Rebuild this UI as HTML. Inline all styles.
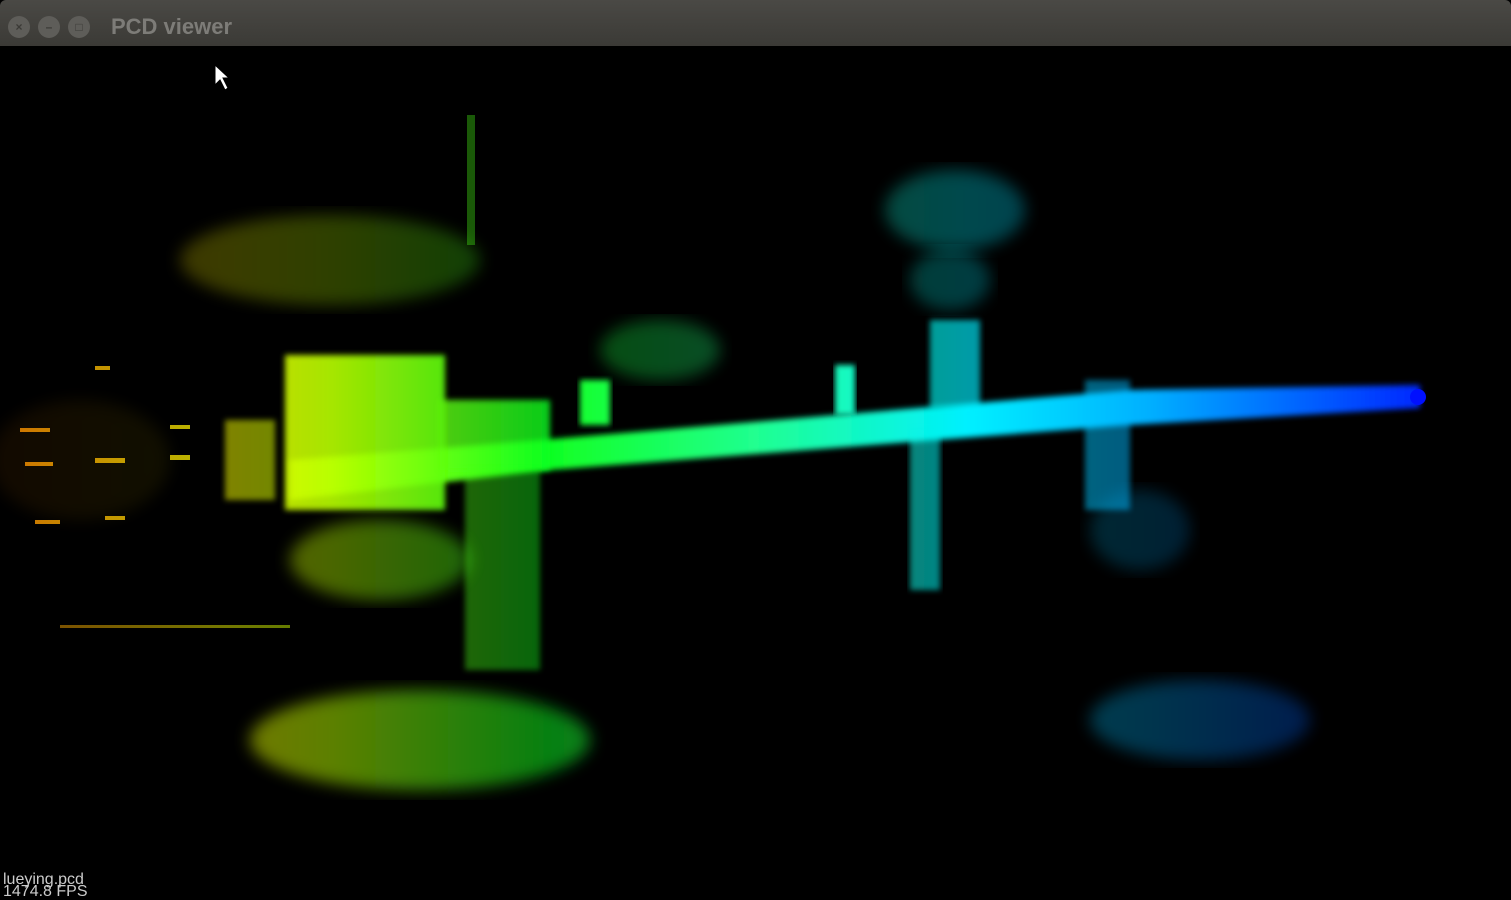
<!DOCTYPE html>
<html><head><meta charset="utf-8"><style>
html,body{margin:0;padding:0;background:#000;width:1511px;height:898px;overflow:hidden}
#bar{position:absolute;left:0;top:0;width:1511px;height:46px;background:linear-gradient(#4a4945,#3b3a36);border-radius:6px 6px 0 0}
.b{position:absolute;top:16px;width:22px;height:22px;border-radius:50%;background:#5e5d59;color:#3b3a36;font:bold 12px "Liberation Sans",sans-serif;text-align:center;line-height:22px}
#t{position:absolute;left:111px;top:14px;font:bold 22px "Liberation Sans",sans-serif;color:#7d7c78}
#txt{position:absolute;left:3px;top:874px;font:16px "Liberation Sans",sans-serif;color:#ccc;line-height:12px}
svg{position:absolute;left:0;top:46px}
</style></head><body>
<div id="bar"><div class="b" style="left:8px">×</div><div class="b" style="left:38px">–</div><div class="b" style="left:68px">□</div><div id="t">PCD viewer</div></div>
<svg width="1511" height="852" viewBox="0 46 1511 852">
<defs>
<linearGradient id="g" x1="0" x2="1511" y1="0" y2="0" gradientUnits="userSpaceOnUse">
<stop offset="0" stop-color="#ff8a00"/><stop offset="0.15" stop-color="#e8f000"/><stop offset="0.22" stop-color="#b8ff00"/>
<stop offset="0.36" stop-color="#10ff20"/><stop offset="0.5" stop-color="#20ff90"/><stop offset="0.64" stop-color="#00f0ff"/>
<stop offset="0.76" stop-color="#00b0ff"/><stop offset="0.95" stop-color="#0020ff"/></linearGradient>
<filter id="f"><feGaussianBlur stdDeviation="3"/></filter>
<filter id="f2"><feGaussianBlur stdDeviation="8"/></filter>
</defs>
<g fill="url(#g)">
<polygon filter="url(#f)" points="290,460 540,440 1130,390 1420,385 1420,408 1130,425 550,470 290,500"/>
<rect filter="url(#f)" x="285" y="355" width="160" height="155" opacity="0.9"/>
<rect filter="url(#f)" x="440" y="400" width="110" height="70" opacity="0.8"/>
<rect filter="url(#f)" x="465" y="470" width="75" height="200" opacity="0.4"/>
<rect filter="url(#f)" x="910" y="430" width="30" height="160" opacity="0.55"/>
<rect filter="url(#f)" x="930" y="320" width="50" height="90" opacity="0.65"/>
<rect filter="url(#f)" x="1085" y="380" width="45" height="130" opacity="0.5"/>
<rect filter="url(#f)" x="835" y="365" width="20" height="50"/>
<rect filter="url(#f)" x="580" y="380" width="30" height="45"/>
<rect filter="url(#f)" x="225" y="420" width="50" height="80" opacity="0.55"/>
<ellipse filter="url(#f2)" cx="420" cy="740" rx="170" ry="50" opacity="0.5"/>
<ellipse filter="url(#f2)" cx="380" cy="560" rx="90" ry="40" opacity="0.4"/>
<ellipse filter="url(#f2)" cx="330" cy="260" rx="150" ry="45" opacity="0.25"/>
<ellipse filter="url(#f2)" cx="955" cy="210" rx="70" ry="40" opacity="0.3"/>
<ellipse filter="url(#f2)" cx="950" cy="280" rx="40" ry="30" opacity="0.25"/>
<ellipse filter="url(#f2)" cx="1200" cy="720" rx="110" ry="40" opacity="0.3"/>
<ellipse filter="url(#f2)" cx="660" cy="350" rx="60" ry="30" opacity="0.3"/>
<ellipse filter="url(#f2)" cx="1140" cy="530" rx="50" ry="40" opacity="0.2"/>
<ellipse filter="url(#f2)" cx="80" cy="460" rx="90" ry="60" opacity="0.07"/>
<g opacity="0.8">
<rect x="20" y="428" width="30" height="4"/><rect x="25" y="462" width="28" height="4"/><rect x="35" y="520" width="25" height="4"/>
<rect x="95" y="458" width="30" height="5"/><rect x="105" y="516" width="20" height="4"/><rect x="170" y="455" width="20" height="5"/>
<rect x="95" y="366" width="15" height="4"/><rect x="170" y="425" width="20" height="4"/>
</g>
<rect x="60" y="625" width="230" height="3" opacity="0.5"/>
<rect x="467" y="115" width="8" height="130" opacity="0.35"/>
<circle cx="1418" cy="397" r="8" fill="#0010ff"/>
</g>
<polygon points="215,65 215,85 220,80 225,90 228,88 223,78 229,78" fill="#fff" stroke="#000" stroke-width="1"/>
</svg>
<div id="txt">lueying.pcd<br>1474.8 FPS</div>
</body></html>
